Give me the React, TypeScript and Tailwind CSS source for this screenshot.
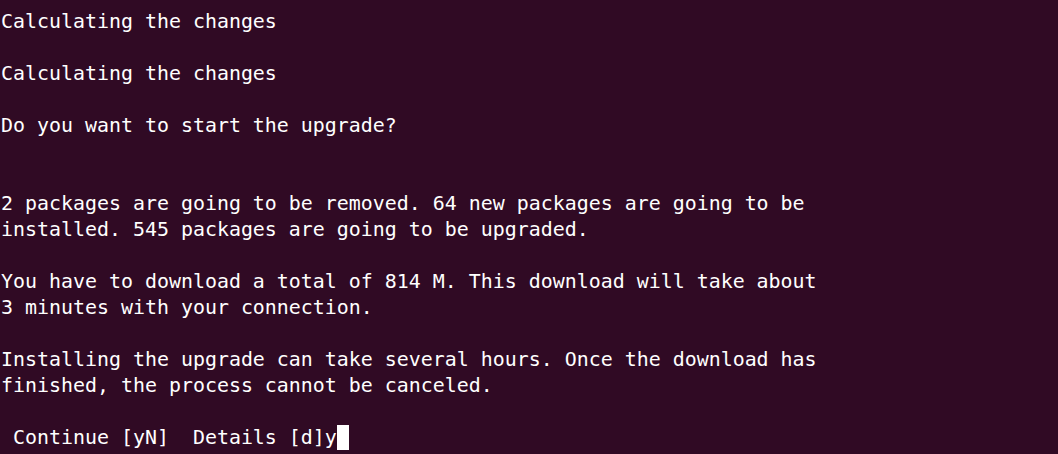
import React from "react";

const lines = [
  "Calculating the changes",
  "",
  "Calculating the changes",
  "",
  "Do you want to start the upgrade?",
  "",
  "",
  "2 packages are going to be removed. 64 new packages are going to be",
  "installed. 545 packages are going to be upgraded.",
  "",
  "You have to download a total of 814 M. This download will take about",
  "3 minutes with your connection.",
  "",
  "Installing the upgrade can take several hours. Once the download has",
  "finished, the process cannot be canceled.",
  "",
];

export default function App() {
  return (
    <div
      className="w-[1058px] h-[454px] overflow-hidden bg-[#300a24] text-[#ffffff] pt-[9px] pl-[1px]"
      style={{ fontFamily: '"DejaVu Sans Mono", "Liberation Mono", monospace' }}
    >
      <div className="text-[19.93px] leading-[26px] whitespace-pre">
        {lines.map((l, i) => (
          <div key={i} className="h-[26px]">
            {l}
          </div>
        ))}
        <div className="h-[26px] flex items-start">
          <span>{" Continue [yN]  Details [d]y"}</span>
          <span className="inline-block w-[12px] h-[25px] mt-[0px] bg-[#ffffff]" />
        </div>
      </div>
    </div>
  );
}
